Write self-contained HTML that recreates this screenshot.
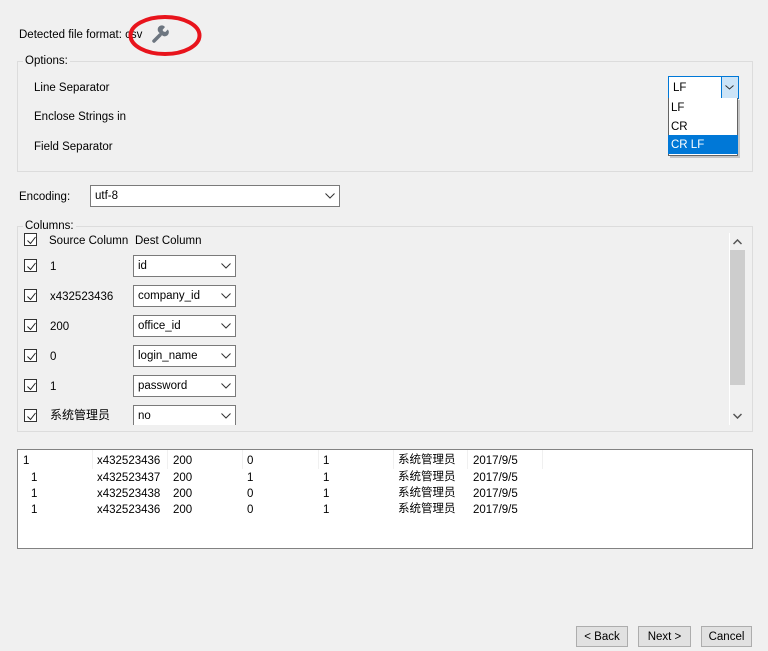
<!DOCTYPE html>
<html><head><meta charset="utf-8"><style>
*{margin:0;padding:0;box-sizing:border-box}
body{width:768px;height:651px;background:#f0f0f0;font-family:"Liberation Sans","Noto Sans CJK SC",sans-serif;font-size:11.5px;line-height:17px;color:#000;position:relative;overflow:hidden}
.a{position:absolute;white-space:nowrap}
.grp{position:absolute;border:1px solid #dcdcdc}
.lbl{position:absolute;background:#f0f0f0;padding:0 2px}
.cb{position:absolute;width:13px;height:13px;border:1px solid #333;background:#fff}
.cb svg{position:absolute;left:1px;top:1px}
.combo{position:absolute;background:#fff;border:1px solid #7a7a7a;height:22px;line-height:21px;padding-left:4px}
.combo .ar{position:absolute;right:4px;top:7px}
.btn{position:absolute;height:21px;border:1px solid #adadad;background:#e1e1e1;text-align:center;line-height:21px}
.cj{line-height:15px}
</style></head><body>
<div class="a" style="left:19px;top:27px">Detected file format: csv</div>
<svg class="a" style="left:128px;top:14px" width="76" height="44">
<ellipse cx="37" cy="21.5" rx="34.5" ry="18.5" fill="none" stroke="#e8141c" stroke-width="4"/>
<path d="M26 27 L32 21" stroke="#6d7680" stroke-width="3.5" stroke-linecap="round"/>
<path d="M30.5 18 a4 4 0 0 1 6.5 -5 l-2.5 3 1 1.5 1.8 .5 2.5-2.5 a4 4 0 0 1 -6 5.5z" fill="#6d7680"/>
</svg>

<div class="grp" style="left:17px;top:61px;width:736px;height:111px"></div>
<div class="lbl" style="left:23px;top:53px">Options:</div>
<div class="a" style="left:34px;top:80px">Line Separator</div>
<div class="a" style="left:34px;top:109px">Enclose Strings in</div>
<div class="a" style="left:34px;top:139px">Field Separator</div>

<div class="a" style="left:668px;top:76px;width:71px;height:23px;border:1px solid #0078d7;background:#fff"></div>
<div class="a" style="left:673px;top:80px">LF</div>
<div class="a" style="left:721px;top:77px;width:17px;height:21px;background:#cce4f7;border-left:1px solid #0078d7"></div>
<svg class="a" style="left:725px;top:85px" width="9" height="5"><path d="M0.5 0.5 L4.5 4 L8.5 0.5" fill="none" stroke="#333"/></svg>
<div class="a" style="left:670px;top:100px;width:70px;height:58px;background:#888;opacity:.4"></div>
<div class="a" style="left:668px;top:98px;width:70px;height:58px;background:#fff;border:1px solid #646464;border-top:0"></div>
<div class="a" style="left:671px;top:100px">LF</div>
<div class="a" style="left:671px;top:119px">CR</div>
<div class="a" style="left:668px;top:135px;width:70px;height:19px;background:#0078d7"></div>
<div class="a" style="left:671px;top:137px;color:#fff">CR LF</div>

<div class="a" style="left:19px;top:189px">Encoding:</div>
<div class="combo" style="left:90px;top:185px;width:250px">utf-8<svg class="ar" width="10" height="6"><path d="M0.5 0.5 L5 5 L9.5 0.5" fill="none" stroke="#333"/></svg></div>

<div class="grp" style="left:17px;top:226px;width:736px;height:206px"></div>
<div class="lbl" style="left:23px;top:218px">Columns:</div>
<div class="cb" style="left:24px;top:233px"><svg width="11" height="11"><path d="M1.5 5.5 L4.5 8.5 L9.5 2" fill="none" stroke="#222"/></svg></div>
<div class="a" style="left:49px;top:233px">Source Column</div>
<div class="a" style="left:135px;top:233px">Dest Column</div>

<div class="cb" style="left:24px;top:259px"><svg width="11" height="11"><path d="M1.5 5.5 L4.5 8.5 L9.5 2" fill="none" stroke="#222"/></svg></div>
<div class="a" style="left:50px;top:259px">1</div>
<div class="combo" style="left:133px;top:255px;width:103px">id<svg class="ar" width="10" height="6"><path d="M0.5 0.5 L5 5 L9.5 0.5" fill="none" stroke="#333"/></svg></div>
<div class="cb" style="left:24px;top:289px"><svg width="11" height="11"><path d="M1.5 5.5 L4.5 8.5 L9.5 2" fill="none" stroke="#222"/></svg></div>
<div class="a" style="left:50px;top:289px">x432523436</div>
<div class="combo" style="left:133px;top:285px;width:103px">company_id<svg class="ar" width="10" height="6"><path d="M0.5 0.5 L5 5 L9.5 0.5" fill="none" stroke="#333"/></svg></div>
<div class="cb" style="left:24px;top:319px"><svg width="11" height="11"><path d="M1.5 5.5 L4.5 8.5 L9.5 2" fill="none" stroke="#222"/></svg></div>
<div class="a" style="left:50px;top:319px">200</div>
<div class="combo" style="left:133px;top:315px;width:103px">office_id<svg class="ar" width="10" height="6"><path d="M0.5 0.5 L5 5 L9.5 0.5" fill="none" stroke="#333"/></svg></div>
<div class="cb" style="left:24px;top:349px"><svg width="11" height="11"><path d="M1.5 5.5 L4.5 8.5 L9.5 2" fill="none" stroke="#222"/></svg></div>
<div class="a" style="left:50px;top:349px">0</div>
<div class="combo" style="left:133px;top:345px;width:103px">login_name<svg class="ar" width="10" height="6"><path d="M0.5 0.5 L5 5 L9.5 0.5" fill="none" stroke="#333"/></svg></div>
<div class="cb" style="left:24px;top:379px"><svg width="11" height="11"><path d="M1.5 5.5 L4.5 8.5 L9.5 2" fill="none" stroke="#222"/></svg></div>
<div class="a" style="left:50px;top:379px">1</div>
<div class="combo" style="left:133px;top:375px;width:103px">password<svg class="ar" width="10" height="6"><path d="M0.5 0.5 L5 5 L9.5 0.5" fill="none" stroke="#333"/></svg></div>
<div class="cb" style="left:24px;top:409px"><svg width="11" height="11"><path d="M1.5 5.5 L4.5 8.5 L9.5 2" fill="none" stroke="#222"/></svg></div>
<div class="a cj" style="left:50px;top:408px;font-size:12px">系统管理员</div>
<div class="combo" style="left:133px;top:405px;width:103px;height:20px;border-bottom:0">no<svg class="ar" width="10" height="6"><path d="M0.5 0.5 L5 5 L9.5 0.5" fill="none" stroke="#333"/></svg></div>
<div class="a" style="left:18px;top:425px;width:710px;height:6px;background:#f0f0f0"></div>

<div class="a" style="left:729px;top:233px;width:1px;height:192px;background:#fff"></div>
<div class="a" style="left:730px;top:250px;width:15px;height:135px;background:#cdcdcd"></div>
<svg class="a" style="left:733px;top:239px" width="9" height="6"><path d="M0.5 5 L4.5 1 L8.5 5" fill="none" stroke="#555" stroke-width="1.5"/></svg>
<svg class="a" style="left:733px;top:413px" width="9" height="6"><path d="M0.5 1 L4.5 5 L8.5 1" fill="none" stroke="#555" stroke-width="1.5"/></svg>

<div class="a" style="left:17px;top:449px;width:736px;height:100px;background:#fff;border:1px solid #828282"></div>
<div class="a" style="left:18px;top:450px;width:525px;height:19px;border-right:1px solid #f0f0f0"></div>
<div class="a" style="left:92px;top:450px;width:1px;height:19px;background:#f0f0f0"></div>
<div class="a" style="left:167px;top:450px;width:1px;height:19px;background:#f0f0f0"></div>
<div class="a" style="left:242px;top:450px;width:1px;height:19px;background:#f0f0f0"></div>
<div class="a" style="left:318px;top:450px;width:1px;height:19px;background:#f0f0f0"></div>
<div class="a" style="left:393px;top:450px;width:1px;height:19px;background:#f0f0f0"></div>
<div class="a" style="left:467px;top:450px;width:1px;height:19px;background:#f0f0f0"></div>
<div class="a" style="left:23px;top:453px">1</div><div class="a" style="left:97px;top:453px">x432523436</div><div class="a" style="left:173px;top:453px">200</div><div class="a" style="left:247px;top:453px">0</div><div class="a" style="left:323px;top:453px">1</div><div class="a cj" style="left:398px;top:453px">系统管理员</div><div class="a" style="left:473px;top:453px">2017/9/5</div>
<div class="a" style="left:31px;top:470px">1</div><div class="a" style="left:97px;top:470px">x432523437</div><div class="a" style="left:173px;top:470px">200</div><div class="a" style="left:247px;top:470px">1</div><div class="a" style="left:323px;top:470px">1</div><div class="a cj" style="left:398px;top:470px">系统管理员</div><div class="a" style="left:473px;top:470px">2017/9/5</div>
<div class="a" style="left:31px;top:486px">1</div><div class="a" style="left:97px;top:486px">x432523438</div><div class="a" style="left:173px;top:486px">200</div><div class="a" style="left:247px;top:486px">0</div><div class="a" style="left:323px;top:486px">1</div><div class="a cj" style="left:398px;top:486px">系统管理员</div><div class="a" style="left:473px;top:486px">2017/9/5</div>
<div class="a" style="left:31px;top:502px">1</div><div class="a" style="left:97px;top:502px">x432523436</div><div class="a" style="left:173px;top:502px">200</div><div class="a" style="left:247px;top:502px">0</div><div class="a" style="left:323px;top:502px">1</div><div class="a cj" style="left:398px;top:502px">系统管理员</div><div class="a" style="left:473px;top:502px">2017/9/5</div>

<div class="btn" style="left:576px;top:626px;width:52px">&lt; Back</div>
<div class="btn" style="left:638px;top:626px;width:53px">Next &gt;</div>
<div class="btn" style="left:701px;top:626px;width:51px">Cancel</div>
</body></html>
